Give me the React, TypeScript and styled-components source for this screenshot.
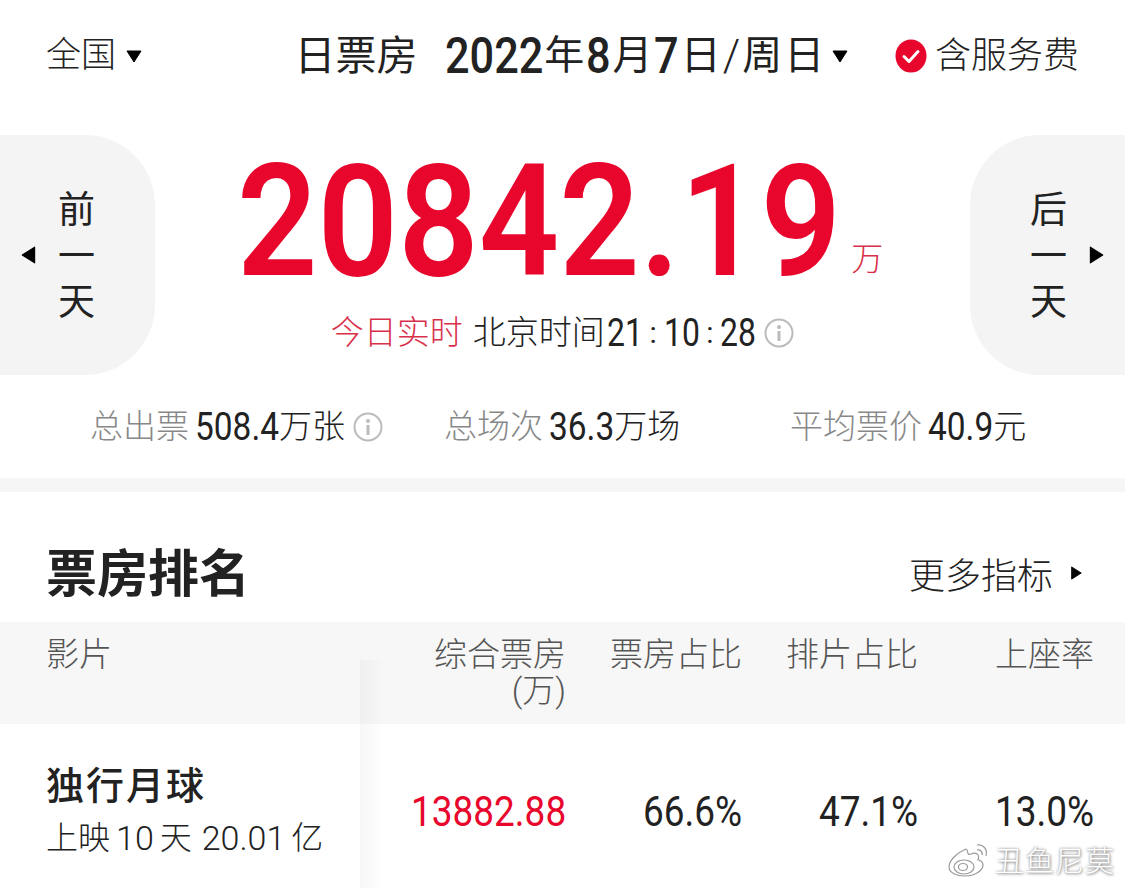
import React from "react";
import styled, { createGlobalStyle } from "styled-components";

const FONT = `Roboto, "Noto Sans CJK SC", sans-serif`;
const RED = "#e8062c";
const SOFT_RED = "#d9304a";
const INK = "#222222";

const GlobalStyle = createGlobalStyle`
    html, body {
        margin: 0;
        padding: 0;
        background: #fff;
    }
    * {
        box-sizing: border-box;
    }
`;

const Page = styled.div`
    position: relative;
    width: 1125px;
    height: 888px;
    overflow: hidden;
    background: #fff;
    color: ${INK};
    font-family: ${FONT};
`;

const SqueezedText = styled.span<{ $size: number; $weight: number; $scale: number }>`
    display: inline-block;
    flex: none;
    font-size: ${p => p.$size}px;
    font-weight: ${p => p.$weight};
    white-space: nowrap;
    transform: scaleX(${p => p.$scale});
    transform-origin: left center;
`;

// the screenshot's digits are a narrow DIN-like face, so Roboto gets squeezed
const charWidth = (c: string) => (c === "." ? 0.265 : c === "%" ? 0.73 : 0.5615);

const Num: React.FC<{ text: string; size: number; weight?: number; scale?: number }> = ({
    text,
    size,
    weight = 400,
    scale = 0.84,
}) => {
    const width = [...text].reduce((sum, c) => sum + charWidth(c), 0) * size * scale;
    return (
        <SqueezedText $size={size} $weight={weight} $scale={scale} style={{ width }}>
            {text}
        </SqueezedText>
    );
};

const Header = styled.header`
    height: 135px;
    padding: 0 46px 24px;
    display: flex;
    align-items: center;
`;

const Region = styled.div`
    font-size: 35px;
    font-weight: 300;
    line-height: 48px;
    width: 252px;
    display: flex;
    align-items: center;
    gap: 10px;
`;

const Title = styled.div`
    font-size: 41px;
    font-weight: 400;
    line-height: 48px;
    width: 151px;
    margin-left: -3px;
`;

const DateText = styled.div`
    font-size: 40px;
    font-weight: 400;
    line-height: 48px;
    width: 451px;
    display: flex;
    align-items: center;
    gap: 2px;
`;

const DateSlash = styled.span`
    font-weight: 300;
    font-size: 44px;
`;

const DateArrow = styled.span`
    display: flex;
    margin-left: 6px;
`;

const ServiceFee = styled.div`
    font-size: 36px;
    font-weight: 300;
    line-height: 48px;
    display: flex;
    align-items: center;
    gap: 8px;
    white-space: nowrap;
`;

const Hero = styled.section`
    height: 240px;
    display: flex;
    justify-content: space-between;
`;

const DayButton = styled.div<{ $side: "left" | "right" }>`
    width: 155px;
    height: 240px;
    background: #f4f4f4;
    border-radius: ${p => (p.$side === "left" ? "0 70px 70px 0" : "70px 0 0 70px")};
    display: flex;
    flex-direction: ${p => (p.$side === "left" ? "row" : "row-reverse")};
    align-items: center;
    padding: ${p => (p.$side === "left" ? "0 0 0 20px" : "0 20px 0 0")};
    gap: 20px;
`;

const DayLabel = styled.div`
    font-size: 37px;
    line-height: 46px;
    width: 37px;
    text-align: center;
    padding-top: 4px;
`;

const HeroCenter = styled.div`
    flex: 1;
    display: flex;
    flex-direction: column;
    align-items: center;
`;

const AmountRow = styled.div`
    height: 168px;
    display: flex;
    align-items: flex-end;
`;

const Amount = styled.div`
    line-height: 168px;
    color: ${RED};
    display: flex;
    margin-bottom: -3px;
`;

const AmountUnit = styled.div`
    font-size: 32px;
    font-weight: 300;
    line-height: 40px;
    color: ${SOFT_RED};
    margin: 0 5px 24px 23px;
`;

const LiveRow = styled.div`
    margin-top: 8px;
    font-size: 33px;
    font-weight: 300;
    line-height: 44px;
    display: flex;
    align-items: center;
    gap: 10px;
`;

const LiveTag = styled.span`
    color: ${SOFT_RED};
`;

const Clock = styled.span`
    display: flex;
    align-items: center;
    margin: 0 -2px 0 -8px;
`;

const ClockColon = styled.span`
    width: 21px;
    text-align: center;
    font-size: 30px;
    font-weight: 400;
`;

const Stats = styled.section`
    height: 103px;
    padding: 0 0 0 90px;
    display: grid;
    grid-template-columns: 354px 346px auto;
    align-items: center;
`;

const Stat = styled.div`
    font-size: 33px;
    font-weight: 300;
    line-height: 44px;
    color: #888;
    display: flex;
    align-items: center;
    white-space: nowrap;
`;

const StatLabel = styled.span`
    margin-right: 6px;
`;

const StatValue = styled.span`
    color: ${INK};
    display: flex;
    align-items: center;
`;

const StatInfo = styled.span`
    display: flex;
    margin-left: 8px;
`;

const Divider = styled.div`
    height: 14px;
    background: #f6f6f6;
`;

const RankHead = styled.div`
    height: 130px;
    padding: 32px 42px 0 46px;
    display: flex;
    justify-content: space-between;
    align-items: center;
`;

const RankTitle = styled.h2`
    margin: 0;
    padding-top: 4px;
    font-size: 51px;
    font-weight: 700;
    line-height: 60px;
`;

const More = styled.div`
    font-size: 36px;
    font-weight: 300;
    display: flex;
    align-items: center;
    gap: 16px;
`;

const Columns = `
    display: grid;
    grid-template-columns: 344px repeat(4, 176px);
    padding: 0 31px 0 46px;
`;

const TableHead = styled.div`
    ${Columns}
    height: 102px;
    padding-top: 15px;
    background: #f7f7f7;
    color: #555;
    font-size: 33px;
    font-weight: 300;
    line-height: 36px;
`;

const HeadCell = styled.div<{ $left?: boolean }>`
    text-align: ${p => (p.$left ? "left" : "right")};
`;

const TableRow = styled.div`
    ${Columns}
    height: 164px;
    align-items: center;
`;

const FilmCell = styled.div`
    padding-top: 14px;
`;

const FilmName = styled.div`
    font-size: 38px;
    font-weight: 500;
    line-height: 50px;
    letter-spacing: 2px;
`;

const FilmMeta = styled.div`
    font-size: 32px;
    font-weight: 300;
    line-height: 54px;
    display: flex;
    align-items: center;
    gap: 6px;
    white-space: nowrap;
`;

const MetaNum = styled.span<{ $gap?: number }>`
    font-size: 34px;
    margin-left: ${p => p.$gap ?? 0}px;
`;

const NumCell = styled.div<{ $red?: boolean }>`
    display: flex;
    justify-content: flex-end;
    padding-top: 12px;
    line-height: 50px;
    color: ${p => (p.$red ? RED : INK)};
`;

const ColumnShadow = styled.div`
    position: absolute;
    left: 360px;
    top: 660px;
    bottom: 0;
    width: 24px;
    background: linear-gradient(to right, rgba(0, 0, 0, 0.03), rgba(0, 0, 0, 0));
`;

const Watermark = styled.div`
    position: absolute;
    right: 10px;
    bottom: 8px;
    display: flex;
    align-items: center;
    gap: 4px;
    color: #fff;
    font-size: 29px;
    font-weight: 300;
    letter-spacing: 1px;
    text-shadow: 0 0 3px #888, 1px 1px 3px #999;
`;

const Triangle: React.FC<{ dir: "down" | "left" | "right"; size?: number }> = ({ dir, size = 16 }) => {
    const points = { down: "1,3 15,3 8,14", left: "13,1 13,15 2,8", right: "3,1 3,15 14,8" }[dir];
    return (
        <svg width={size} height={size} viewBox="0 0 16 16" style={{ flex: "none" }}>
            <polygon points={points} fill="#000" stroke="#000" strokeWidth="1" strokeLinejoin="round" />
        </svg>
    );
};

const InfoIcon: React.FC = () => (
    <svg width="30" height="30" viewBox="0 0 30 30" style={{ flex: "none" }}>
        <circle cx="15" cy="15" r="13.5" fill="none" stroke="#bbb" strokeWidth="2" />
        <circle cx="15" cy="9" r="2" fill="#bbb" />
        <rect x="13.5" y="13" width="3" height="10" fill="#bbb" />
    </svg>
);

const CheckBadge: React.FC = () => (
    <svg width="32" height="34" viewBox="0 0 32 34" style={{ flex: "none" }}>
        <ellipse cx="16" cy="17" rx="15.5" ry="16.5" fill={RED} />
        <path d="M9 17.5 L14 22.5 L23 12.5" fill="none" stroke="#fff" strokeWidth="3" strokeLinecap="round" strokeLinejoin="round" />
    </svg>
);

const WeiboIcon: React.FC = () => (
    <svg width="44" height="38" viewBox="0 0 44 38" style={{ flex: "none" }}>
        <g fill="none" stroke="#999" strokeWidth="1.2">
            <path d="M19 9 C9 13 2 21 2 27 C2 33 10 36 18 36 C27 36 36 31 36 25 C36 21 32 20 31 20 C33 14 29 12 24 14 C19 16 22 10 19 9 Z" />
            <ellipse cx="17" cy="27" rx="10" ry="7" />
            <ellipse cx="16" cy="27" rx="4.5" ry="3.5" />
            <path d="M30 5 C36 4 41 9 39 16" />
            <path d="M30 10 C33 9 36 12 35 15" />
        </g>
    </svg>
);

const App: React.FC = () => (
    <Page>
        <GlobalStyle />
        <Header>
            <Region>全国<Triangle dir="down" /></Region>
            <Title>日票房</Title>
            <DateText>
                <Num text="2022" size={50} weight={500} scale={0.865} />
                <span>年</span>
                <Num text="8" size={50} weight={500} scale={0.865} />
                <span>月</span>
                <Num text="7" size={50} weight={500} scale={0.865} />
                <span>日</span>
                <DateSlash>/</DateSlash>
                <span>周</span>
                <span>日</span>
                <DateArrow><Triangle dir="down" /></DateArrow>
            </DateText>
            <ServiceFee><CheckBadge />含服务费</ServiceFee>
        </Header>

        <Hero>
            <DayButton $side="left">
                <Triangle dir="left" size={18} />
                <DayLabel>前一天</DayLabel>
            </DayButton>
            <HeroCenter>
                <AmountRow>
                    <Amount><Num text="20842.19" size={156} weight={600} scale={0.904} /></Amount>
                    <AmountUnit>万</AmountUnit>
                </AmountRow>
                <LiveRow>
                    <LiveTag>今日实时</LiveTag>
                    <span>北京时间</span>
                    <Clock>
                        <Num text="21" size={38} />
                        <ClockColon>:</ClockColon>
                        <Num text="10" size={38} />
                        <ClockColon>:</ClockColon>
                        <Num text="28" size={38} />
                    </Clock>
                    <InfoIcon />
                </LiveRow>
            </HeroCenter>
            <DayButton $side="right">
                <Triangle dir="right" size={18} />
                <DayLabel>后一天</DayLabel>
            </DayButton>
        </Hero>

        <Stats>
            <Stat>
                <StatLabel>总出票</StatLabel>
                <StatValue><Num text="508.4" size={38} scale={0.88} />万张</StatValue>
                <StatInfo><InfoIcon /></StatInfo>
            </Stat>
            <Stat>
                <StatLabel>总场次</StatLabel>
                <StatValue><Num text="36.3" size={38} scale={0.88} />万场</StatValue>
            </Stat>
            <Stat>
                <StatLabel>平均票价</StatLabel>
                <StatValue><Num text="40.9" size={38} scale={0.88} />元</StatValue>
            </Stat>
        </Stats>

        <Divider />

        <RankHead>
            <RankTitle>票房排名</RankTitle>
            <More>更多指标<Triangle dir="right" size={14} /></More>
        </RankHead>

        <TableHead>
            <HeadCell $left>影片</HeadCell>
            <HeadCell>综合票房<br />(万)</HeadCell>
            <HeadCell>票房占比</HeadCell>
            <HeadCell>排片占比</HeadCell>
            <HeadCell>上座率</HeadCell>
        </TableHead>

        <TableRow>
            <FilmCell>
                <FilmName>独行月球</FilmName>
                <FilmMeta>
                    上映<MetaNum>10</MetaNum>天<MetaNum $gap={4}>20.01</MetaNum>亿
                </FilmMeta>
            </FilmCell>
            <NumCell $red><Num text="13882.88" size={42} scale={0.88} /></NumCell>
            <NumCell><Num text="66.6%" size={42} scale={0.88} /></NumCell>
            <NumCell><Num text="47.1%" size={42} scale={0.88} /></NumCell>
            <NumCell><Num text="13.0%" size={42} scale={0.88} /></NumCell>
        </TableRow>

        <ColumnShadow />
        <Watermark><WeiboIcon />丑鱼尼莫</Watermark>
    </Page>
);

export default App;
